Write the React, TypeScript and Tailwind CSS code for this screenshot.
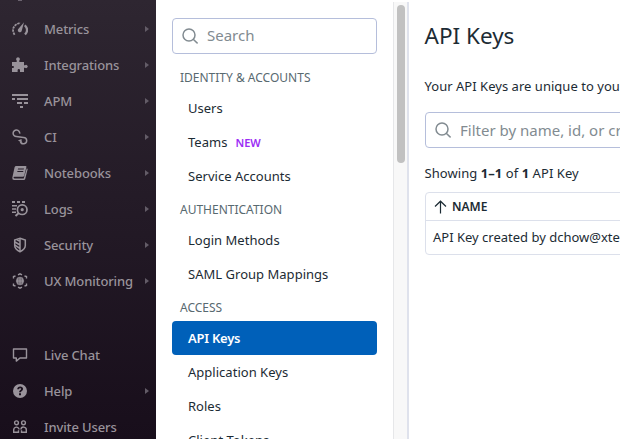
import type { ReactNode } from "react";

const line = { fill: "none", stroke: "currentColor", strokeWidth: 1.4 } as const;

function Icon({ children }: { children: ReactNode }) {
  return (
    <svg viewBox="0 0 16 16" className="size-4 shrink-0" fill="currentColor">
      {children}
    </svg>
  );
}

const icons: Record<string, ReactNode> = {
  Metrics: (
    <Icon>
      <path d="M2.600 13.800Q0 9.500 1.800 6.200T8.500 2" {...line} strokeWidth={1.800} strokeDasharray="2.400 .8" />
      <path d="M12 1.200 9.800 9.500a2 2 0 1 1-3.300-1.700z" />
      <path d="M12.800 4.200Q17.300 8.800 13 13.600" {...line} strokeWidth={2.200} />
    </Icon>
  ),
  Integrations: (
    <Icon>
      <path d="M0 5h4.700V3.400a1.800 1.800 0 1 1 2.600 0V5H12v3.300h1a1.600 1.600 0 1 1 0 2.400h-1V15H8v-1.800q0-1.200-1.200-1.200t-1.200 1.200V15H0v-4.100h1q1 0 1-1t-1-1H0z" />
    </Icon>
  ),
  APM: (
    <Icon>
      <path d="M0 1h16v2H0zM0 5h3v2H0zM5 5h11v2H5zM5 9h5v2H5zM12 9h4v2h-4zM8 13h3v2H8z" />
    </Icon>
  ),
  CI: (
    <Icon>
      <path d="M7.700 4.700A3.300 3.300 0 1 0 4.400 7.600Q6.200 7.600 8 8t3.600.4a3.200 3.200 0 1 1-3.200 4.100" {...line} strokeWidth={1.500} />
      <path d="m5.900 11.600 3.600-1.500.3 3.400z" />
    </Icon>
  ),
  Notebooks: (
    <Icon>
      <path fillRule="evenodd" d="M4.300 1h9.300q1.100 0 .8 1.100l-2.200 8.700q-.3 1-1.400 1H2.500q-1 0-1 .8t1 .8h9.200L14.800 3.300l.9.700-2.500 10q-.3 1-1.400 1H2.200Q0 15 .3 12.700l2.300-10.400Q2.900 1 4.300 1Zm1.800 2.500-.3 1h5.900l.3-1zM5.500 5.900l-.3 1h5.900l.3-1z" />
    </Icon>
  ),
  Logs: (
    <Icon>
      <path d="M0 0h3v2H0zM5 0h3v2H5zM10 0h3v2h-3zM0 4h5v1.600H0zM0 7.200h4v1.600H0zM0 10.400h4V12H0z" />
      <circle cx="10.200" cy="8.700" r="4.800" {...line} strokeWidth={1.700} />
      <circle cx="10.200" cy="8.700" r="1.600" />
      <path d="m6.800 12.100-3.300 3" {...line} strokeWidth={2} />
    </Icon>
  ),
  Security: (
    <Icon>
      <path d="M8 1.200 13.300 3v5.500c0 3-2.400 4.800-5.300 6.200-2.900-1.400-5.300-3.200-5.300-6.200V3z" {...line} strokeWidth={1.500} />
      <path d="M8 1v14M3 5l5 3M3 8.200l5 3.300M8 4.300 5 2.800" {...line} strokeWidth={1.500} />
    </Icon>
  ),
  "UX Monitoring": (
    <Icon>
      <path d="m6 1.800 2-1 2 1M1.500 5.500v-2l2-.5M14.500 5.500v-2l-2-.5M1.500 10.500v2l2 .5M14.500 10.500v2l-2 .5M6 14.200l2 1 2-1" {...line} />
      <circle cx="8" cy="8" r="4.200" opacity=".65" />
      <path d="M8 4v8M4 8h8M6 4.500q-1.300 3.500 0 7M10 4.500q1.300 3.500 0 7" {...line} strokeWidth={1} />
    </Icon>
  ),
  "Live Chat": (
    <Icon>
      <path d="M1.500 2h13v9H8l-3.700 3.100V11H1.500z" {...line} strokeLinejoin="round" />
    </Icon>
  ),
  Help: (
    <Icon>
      <path fillRule="evenodd" d="M8 1a7 7 0 1 1 0 14A7 7 0 0 1 8 1ZM5.200 6.300h1.900c0-.8.400-1.100 1-1.100.7 0 1 .4 1 .9 0 1-2 1.200-2 3.200h1.800c0-1.300 2.200-1.600 2.200-3.400 0-1.500-1.200-2.400-2.900-2.400-1.800 0-3 1.100-3 2.800ZM7 10.300v2h2v-2z" />
    </Icon>
  ),
  "Invite Users": (
    <Icon>
      <circle cx="4.500" cy="3.800" r="1.900" {...line} />
      <circle cx="11.500" cy="3.800" r="1.900" {...line} />
      <path d="M1.700 13.300v-2.200a2.700 2.700 0 0 1 5.400-.6M8.900 10.500a2.700 2.700 0 0 1 5.400.6v2.200M1 13.300h5.500v-2M15 13.300H9.500v-2" {...line} />
    </Icon>
  ),
};

function NavItem({ label, arrow = true }: { label: string; arrow?: boolean }) {
  return (
    <a className="flex h-9 shrink-0 items-center pl-3 pr-[7px] text-[#99939b]">
      {icons[label]}
      <span className="ml-4 flex-1 whitespace-nowrap pt-0.5 text-[13px] font-medium tracking-[-0.13px]">{label}</span>
      {arrow && (
        <svg viewBox="0 0 4 6" className="h-1.5 w-1 text-[#635c67]" fill="currentColor">
          <path d="M0 0 4 3 0 6z" />
        </svg>
      )}
    </a>
  );
}

function SearchIcon() {
  return (
    <svg viewBox="0 0 16 16" className="size-4 shrink-0 text-[#828b91]" fill="none" stroke="currentColor" strokeWidth="1.500">
      <circle cx="7" cy="7" r="6" />
      <path d="m11.200 11.200 4.400 4.200" />
    </svg>
  );
}

function Heading({ children }: { children: ReactNode }) {
  return <h2 className="flex h-[30px] shrink-0 items-center whitespace-nowrap pl-2 pt-[3px] text-xs text-[#586970]">{children}</h2>;
}

function SideLink({ children, active = false }: { children: ReactNode; active?: boolean }) {
  return (
    <a className={`flex h-[34px] shrink-0 items-center rounded px-4 pt-0.5 text-[13px] ${active ? "bg-[#0060b9] font-semibold tracking-[-0.25px] text-white" : "font-[450] tracking-[0.02px] text-[#1c2b34]"}`}>
      {children}
    </a>
  );
}

export default function App() {
  return (
    <div className="flex h-[439px] w-[620px] overflow-hidden bg-white font-['Noto_Sans','Liberation_Sans',sans-serif] text-[#1c2b34]">
      <nav className="flex w-[156px] shrink-0 flex-col overflow-hidden bg-linear-to-b from-[#2e2631] to-[#180e1b]">
        <div className="flex h-[11px] shrink-0 justify-center pr-[117px]">
          <span className="h-px w-1 bg-[#6b636f]" />
        </div>
        {["Metrics", "Integrations", "APM", "CI", "Notebooks", "Logs", "Security", "UX Monitoring"].map((label) => (
          <NavItem key={label} label={label} />
        ))}
        <div className="h-[38px] shrink-0" />
        <NavItem label="Live Chat" arrow={false} />
        <NavItem label="Help" />
        <NavItem label="Invite Users" arrow={false} />
      </nav>

      <aside className="flex w-[237px] shrink-0 flex-col overflow-hidden px-4 pt-[18px]">
        <div className="mb-[7px] flex h-9 shrink-0 items-center gap-[9px] rounded border border-[#b5bedb] pl-[9px] text-[#828b91]">
          <SearchIcon />
          <span className="relative -top-px text-[15px]">Search</span>
        </div>
        <Heading>IDENTITY &amp; ACCOUNTS</Heading>
        <SideLink>Users</SideLink>
        <SideLink>
          Teams <span className="ml-2 text-[11px] font-semibold text-[#9b2df5]">NEW</span>
        </SideLink>
        <SideLink>Service Accounts</SideLink>
        <Heading>AUTHENTICATION</Heading>
        <SideLink>Login Methods</SideLink>
        <SideLink>SAML Group Mappings</SideLink>
        <Heading>ACCESS</Heading>
        <SideLink active>API Keys</SideLink>
        <SideLink>Application Keys</SideLink>
        <SideLink>Roles</SideLink>
        <SideLink>Client Tokens</SideLink>
      </aside>

      <div className="mt-0.5 w-4 shrink-0 border-l border-r-2 border-l-[#e6e7e9] border-r-[#dfe2ec] bg-[#f8f8f8] pl-[3px] pt-[3px]">
        <div className="h-[158px] w-2 rounded-full bg-[#c1c1c1]" />
      </div>

      <main className="flex min-w-0 flex-1 flex-col pl-4">
        <h1 className="-ml-[0.5px] mt-5 h-8 whitespace-nowrap text-[22.5px] leading-8">API Keys</h1>
        <p className="-ml-[0.5px] mt-6 h-5 whitespace-nowrap text-[13px] font-[450] leading-5 tracking-[0.03px]">Your API Keys are unique to your organization.</p>
        <div className="mt-4 flex h-9 w-[300px] shrink-0 items-center gap-[9px] rounded border border-[#b5bedb] pl-[9px] text-[15px] text-[#828b91]">
          <SearchIcon />
          <span className="whitespace-nowrap">Filter by name, id, or created by</span>
        </div>
        <p className="-ml-[0.5px] mt-[15px] h-[21px] whitespace-nowrap text-[13px] font-[450] leading-5 tracking-[0.06px]">
          Showing <b>1–1</b> of <b>1</b> API Key
        </p>
        <section className="mt-2 h-[63px] w-[300px] shrink-0 rounded border border-[#dce0eb]">
          <div className="flex h-7 items-center gap-[5px] border-b border-[#dce0eb] pl-2 text-xs font-semibold">
            <svg viewBox="0 0 13 14" className="h-3.5 w-[13px]" fill="none" stroke="currentColor" strokeWidth="1.200">
              <path d="M6.500 13.500V1.200M1 6.500l5.500-5.300L12 6.500" />
            </svg>
            NAME
          </div>
          <div className="flex h-[33px] items-center whitespace-nowrap pl-[7px] text-[13px]">API Key created by dchow@xtelligent.io</div>
        </section>
      </main>
    </div>
  );
}
